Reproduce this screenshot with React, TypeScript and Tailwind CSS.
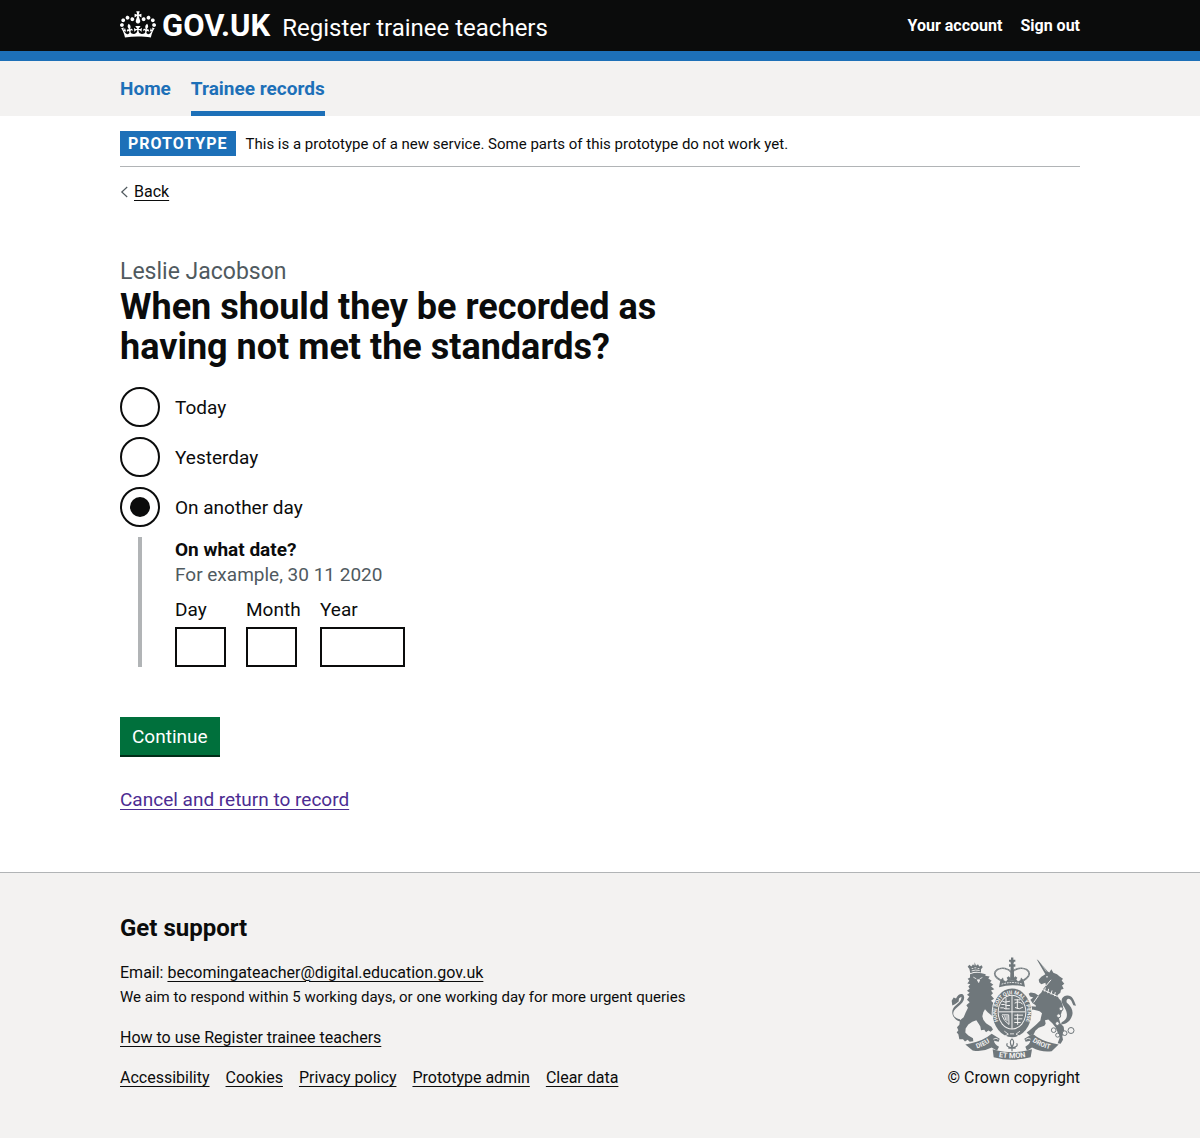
import { useState } from "react";

const CROWN_PATH =
  "M25 30.2c3.5 1.5 7.7-.2 9.1-3.7 1.5-3.6-.2-7.8-3.9-9.2-3.6-1.4-7.6.3-9.1 3.9-1.4 3.5.3 7.5 3.9 9zM9 39.5c3.6 1.5 7.8-.2 9.2-3.7 1.5-3.6-.2-7.8-3.9-9.1-3.6-1.5-7.6.2-9.1 3.8-1.4 3.5.3 7.5 3.8 9zM4.4 57.2c3.5 1.5 7.7-.2 9.1-3.8 1.5-3.6-.2-7.7-3.9-9.1-3.5-1.5-7.6.3-9.1 3.8-1.4 3.5.3 7.6 3.9 9.1zm38.3-21.4c3.5 1.5 7.7-.2 9.1-3.8 1.5-3.6-.2-7.7-3.9-9.1-3.6-1.5-7.6.3-9.1 3.8-1.3 3.6.4 7.7 3.9 9.1zm64.4-5.6c-3.6 1.5-7.8-.2-9.1-3.7-1.5-3.6.2-7.8 3.8-9.2 3.6-1.4 7.7.3 9.2 3.9 1.3 3.5-.4 7.5-3.9 9zm15.9 9.3c-3.6 1.5-7.7-.2-9.1-3.7-1.5-3.6.2-7.8 3.7-9.1 3.6-1.5 7.7.2 9.2 3.8 1.5 3.5-.3 7.5-3.8 9zm4.7 17.7c-3.6 1.5-7.8-.2-9.2-3.8-1.5-3.6.2-7.7 3.9-9.1 3.6-1.5 7.7.3 9.2 3.8 1.3 3.5-.4 7.6-3.9 9.1zM89.3 35.8c-3.6 1.5-7.8-.2-9.2-3.8-1.4-3.6.2-7.7 3.9-9.1 3.6-1.5 7.7.3 9.2 3.8 1.4 3.6-.3 7.7-3.9 9.1zM69.7 17.7l8.9 4.7V9.3l-8.9 2.8c-.2-.3-.5-.6-.9-.9L72.4 0H59.6l3.5 11.2c-.3.3-.6.5-.9.9l-8.8-2.8v13.1l8.8-4.7c.3.3.6.7.9.9l-5 15.4v.1c-.2.8-.4 1.6-.4 2.4 0 4.1 3.1 7.5 7 8.1h.2c.3 0 .7.1 1 .1.4 0 .7 0 1-.1h.2c4-.6 7.1-4.1 7.1-8.1 0-.8-.1-1.7-.4-2.4V34l-5.1-15.4c.4-.2.7-.6 1-.9zM66 92.8c16.9 0 32.8 1.1 47.1 3.2 4-16.9 8.9-26.7 14-33.5l-9.6-3.4c1 4.9 1.1 7.2 0 10.2-1.5-1.4-3-4.3-4.2-8.7L108.6 76c2.8-2 5-3.2 7.5-3.3-4.4 9.4-10 11.9-13.6 11.2-4.3-.8-6.3-4.6-5.6-7.9 1-4.7 5.7-5.9 8-.5 4.3-8.7-3-11.4-7.6-8.8 7.1-7.2 7.9-13.5 2.1-21.1-8 6.1-8.1 12.3-4.5 20.8-4.7-5.4-12.1-2.5-9.5 6.2 3.4-5.2 7.9-2 7.2 3.1-.6 4.3-6.4 7.8-13.5 7.2-10.3-.9-10.9-8-11.2-13.8 2.5-.5 7.1 1.8 11 7.3L80.2 60c-4.1 4.4-8 5.3-12.3 5.4 1.4-4.4 8-11.6 8-11.6H55.5s6.4 7.2 7.9 11.6c-4.2-.1-8-1-12.3-5.4l1.4 16.4c3.9-5.5 8.5-7.7 10.9-7.3-.3 5.8-.9 12.8-11.1 13.8-7.2.6-12.9-2.9-13.5-7.2-.7-5 3.8-8.3 7.1-3.1 2.7-8.7-4.6-11.6-9.4-6.2 3.7-8.5 3.6-14.7-4.6-20.8-5.8 7.6-5 13.9 2.2 21.1-4.7-2.6-11.9.1-7.7 8.8 2.3-5.5 7.1-4.2 8.1.5.7 3.3-1.3 7.1-5.7 7.9-3.5.7-9-1.8-13.5-11.2 2.5.1 4.7 1.3 7.5 3.3l-4.7-15.4c-1.2 4.4-2.7 7.2-4.3 8.7-1.1-3-.9-5.3 0-10.2l-9.5 3.4c5 6.9 9.9 16.7 14 33.5 14.8-2.1 30.8-3.2 47.7-3.2z";

function Crown() {
  return (
    <svg viewBox="0 0 132 97" className="mb-[3px] h-[27px] w-9 shrink-0 fill-white" aria-hidden="true">
      <path d={CROWN_PATH} />
    </svg>
  );
}

function CoatOfArms() {
  const dark = "#6f777b";
  const light = "#f3f2f1";
  return (
    <svg viewBox="36 32 375 308" width="125" height="103" aria-hidden="true" fill={dark} fontFamily="Roboto, sans-serif" fontWeight="700">
      <defs>
        <path id="arms-motto" d="M186 238A46 56 0 1 1 252 238" />
        <path id="arms-dieu" d="M108 308Q136 300 158 283" />
        <path id="arms-mon" d="M172 330Q219 340 267 330" />
        <path id="arms-droit" d="M275 281Q302 302 338 309" />
      </defs>

      {/* Lion's crown */}
      <path d="M94 80L91 67L86 61L91 55L97 60L102 53L106 58L107 47L111 58L117 53L121 60L128 56L131 62L126 68L126 78Q109 73 94 80Z" />
      <path d="M98 66h5M106 64h6M116 66h5M98 73Q110 69 122 72" stroke={light} strokeWidth="2.5" fill="none" />

      {/* Lion */}
      <path d="M93 83Q110 77 128 80L140 83L139 88L152 90L148 96L158 103L153 107L163 115L156 119L166 128L156 132L162 140L156 146L165 157L156 163L164 170L160 176L176 184L173 191L182 196L172 201L177 209L168 213L158 207L146 197L138 188L133 197L130 209L133 220L141 230L157 241L162 249L155 256L148 252L141 257L136 250L126 251L124 240L118 230L112 221L100 226L88 234L80 246L79 258L88 267L102 275L103 284L92 286L86 280L78 285L72 278L61 278L58 263L53 258L58 251L54 242L61 235L63 221L74 212L80 198L87 184L82 176L92 167L84 160L91 150L84 145L92 139L84 133L92 127L88 120L94 113L85 111L91 103L86 97L93 93Z" />
      <path d="M103 92l9 5M122 97l8-4M115 100h7l-3 8z" stroke={light} strokeWidth="2.5" fill={light} />
      <path d="M63 218C40 214 36 196 54 183C72 170 79 158 74 147C69 139 58 142 51 156L44 153L38 163L40 177L48 173L59 165L60 156L67 151C69 161 61 169 50 177C30 193 42 220 63 225Z" />

      {/* Unicorn */}
      <path d="M293 38L299 43L326 75L331 78L337 68L343 79L354 83L362 90L372 97L368 102L376 112L369 117L374 127L366 130L364 139L355 146L359 155L367 164L372 180L369 193L365 207L360 216L364 230L374 241L376 255L370 269L372 280L365 292L356 290L362 274L357 260L350 243L340 230L328 219L318 221L320 232L316 238L299 244L289 253L285 262L272 267L263 258L271 252L278 246L291 235L304 222L306 212L309 200L302 194L292 187L290 176L281 170L274 160L283 153L273 150L269 142L275 138L288 140L298 147L307 138L313 127L321 117L319 109L307 113L301 108L299 100L307 91L319 83Z" />
      <path d="M303 194l-22-5l-5 5l-6-6l7-9l16 2l8 6z" />
      <path d="M302 44l20 31" stroke={light} strokeWidth="1.5" />
      <circle cx="324" cy="91" r="2.5" fill={light} />
      <path d="M304 126l52 24M309 119l-3 13M319 123l-3 12M329 127l-3 13M339 132l-3 12M349 137l-3 12" stroke={light} strokeWidth="3" fill="none" />
      <path d="M298 148l-14 20M336 100l-15 18" stroke={light} strokeWidth="3" fill="none" />
      <path d="M368 227C388 219 387 199 376 182C362 163 367 149 384 147C399 146 404 158 411 178L403 176L397 163C391 152 380 156 383 168C400 182 405 199 397 213C390 228 379 233 366 234Z" />
      <g fill={light} stroke={dark} strokeWidth="3">
        <circle cx="366" cy="187" r="6" />
        <circle cx="359" cy="208" r="6" />
        <circle cx="355" cy="231" r="6" />
        <circle cx="344" cy="251" r="7" />
        <circle cx="356" cy="266" r="6" />
        <circle cx="377" cy="260" r="7" />
        <circle cx="396" cy="252" r="9" />
      </g>

      {/* Ribbon and rose */}
      <path d="M79 294L96 290Q132 284 158 262L182 277L179 286L165 283Q166 294 180 301L174 313L158 303Q130 318 101 312Z" />
      <path d="M359 294L342 290Q307 284 281 262L256 277L260 286L274 283Q273 293 259 301L264 313L279 303Q307 318 338 314Z" />
      <path d="M161 308L174 312Q218 322 264 312L279 308L275 332Q219 347 164 332Z" />
      <path d="M163 278Q172 272 178 279M275 278Q267 272 260 279" fill="none" stroke={light} strokeWidth="2.5" />
      <path d="M219 277q10 8 0 25q-10-17 0-25zM205 290q-6 11 12 13M233 290q6 11-12 13M208 305h22M219 302v12" fill="none" stroke={dark} strokeWidth="3.5" />

      {/* Royal crown */}
      <path d="M186 102C163 90 164 77 174 70C190 61 208 66 218 78C229 66 248 61 264 70C274 77 274 90 253 102" fill="none" stroke={dark} strokeWidth="5" />
      <path d="M186 102C163 90 164 77 174 70C190 61 208 66 218 78C229 66 248 61 264 70C274 77 274 90 253 102" fill="none" stroke={light} strokeWidth="1.5" strokeDasharray="2 3" />
      <path d="M215 61h-5v-8h6l-2-7h-4v-6h6v-7h7v7h6v6h-4l-2 7h6v8h-5l2 42h-13z" />
      <path d="M184 101l8-8l2 8l7 4l5-6l-3-5l6-5l6 6l-3 6l7 2l7-2l-3-6l6-6l6 5l-3 5l5 6l7-4l2-8l8 8l4 20Q219 111 180 122Z" />
      <path d="M188 113Q219 103 250 113" stroke={light} strokeWidth="3" strokeDasharray="5 3" fill="none" />

      {/* Garter and shield */}
      <ellipse cx="219" cy="199" rx="61" ry="76" fill={light} />
      <ellipse cx="219" cy="199" rx="58" ry="73" />
      <text fill={light} fontSize="16">
        <textPath href="#arms-motto" textAnchor="middle" startOffset="50%">HONI SOIT QUI MAL Y PENSE</textPath>
      </text>
      <ellipse cx="219" cy="197" rx="43" ry="52" fill={light} />
      <ellipse cx="219" cy="197" rx="40" ry="49" />
      <path d="M219 147v100M179 196h80" stroke={light} strokeWidth="3" />
      <g stroke={light} strokeWidth="3" fill="none">
        <path d="M190 164l8 3l15-3M187 174h9l7 3h10M184 184h9l6 3h13M201 155v33" />
        <path d="M226 160h17M227 170q13-8 24 3M228 183q14 8 24-1M235 158v29" />
        <path d="M189 207q5 16 21 27M189 205h20l1 29M197 207l3 13M204 207v17" />
        <path d="M226 206h26M225 217h25M226 228h19M236 202v33" />
      </g>
      <path d="M196 254l12 9l-11 6M213 262h12M243 254l-12 9l11 6" stroke={light} strokeWidth="2.5" fill="none" />

      <g fill={light} fontSize="20">
        <text><textPath href="#arms-dieu" textAnchor="middle" startOffset="50%">DIEU</textPath></text>
        <text fontSize="22"><textPath href="#arms-mon" textAnchor="middle" startOffset="50%">ET MON</textPath></text>
        <text><textPath href="#arms-droit" textAnchor="middle" startOffset="50%">DROIT</textPath></text>
      </g>
    </svg>
  );
}

const OPTIONS = ["Today", "Yesterday", "On another day"];

const DATE_PARTS = [
  { id: "day", label: "Day", column: "w-[51px]", input: "w-[51px]" },
  { id: "month", label: "Month", column: "w-[54px]", input: "w-[51px]" },
  { id: "year", label: "Year", column: "w-[85px]", input: "w-[85px]" },
];

const FOOTER_LINKS = ["Accessibility", "Cookies", "Privacy policy", "Prototype admin", "Clear data"];

const footerLink = "underline decoration-1 underline-offset-[3px]";

export default function App() {
  const [choice, setChoice] = useState("On another day");

  return (
    <div className="flex min-h-screen flex-col bg-white font-['Roboto',sans-serif] text-[#0b0c0c]">
      <header>
        <div className="border-b-10 border-[#1d70b8] bg-[#0b0c0c] text-white">
          <div className="mx-auto flex h-[51px] max-w-[960px] items-center justify-between">
            <div className="flex items-center">
              <a href="#govuk" className="flex items-center gap-[6px]">
                <Crown />
                <span className="text-[31px] leading-[30px] font-bold">GOV.UK</span>
              </a>
              <a href="#service" className="ml-3 pt-1 text-2xl leading-[30px]">Register trainee teachers</a>
            </div>
            <div className="flex gap-[18px] text-base leading-5 font-bold">
              <a href="#account">Your account</a>
              <a href="#sign-out">Sign out</a>
            </div>
          </div>
        </div>
        <nav className="bg-[#f3f2f1]">
          <div className="mx-auto flex max-w-[960px] gap-5 text-[19px] leading-[25px] font-bold text-[#1d70b8]">
            <a href="#home" className="border-b-5 border-transparent pt-[15px] pb-[10px]">Home</a>
            <a href="#records" aria-current="page" className="border-b-5 border-[#1d70b8] pt-[15px] pb-[10px]">Trainee records</a>
          </div>
        </nav>
      </header>

      <div className="mx-auto w-full max-w-[960px] grow">
        <div className="flex items-center gap-[10px] border-b border-[#b1b4b6] pt-[15px] pb-[10px]">
          <strong className="bg-[#1d70b8] px-2 text-base leading-[25px] font-bold tracking-[1px] text-white">PROTOTYPE</strong>
          <span className="text-[15px] leading-5">This is a prototype of a new service. Some parts of this prototype do not work yet.</span>
        </div>

        <a href="#back" className="mt-[15px] inline-flex items-center gap-[6px] text-base leading-5">
          <svg viewBox="0 0 8 12" className="h-3 w-2" fill="none" stroke="#505a5f" strokeWidth="1.2" aria-hidden="true">
            <path d="M7.2 1L1.8 6L7.2 11" />
          </svg>
          <span className="underline decoration-1 underline-offset-[3px]">Back</span>
        </a>

        <form className="mt-[52px] max-w-[630px]" onSubmit={(e) => e.preventDefault()}>
          <fieldset>
            <legend>
              <span className="block text-[23px] leading-[30px] text-[#505a5f]">Leslie Jacobson</span>
              <h1 className="max-w-[560px] text-4xl leading-10 font-bold">When should they be recorded as having not met the standards?</h1>
            </legend>
            <div className="mt-5 flex flex-col gap-[10px]">
              {OPTIONS.map((option) => (
                <label key={option} className="flex h-10 items-center gap-[15px] self-start text-[19px] leading-[25px]">
                  <input
                    type="radio"
                    name="when"
                    value={option}
                    checked={choice === option}
                    onChange={() => setChoice(option)}
                    className="grid size-10 appearance-none place-content-center rounded-full border-2 border-[#0b0c0c] before:size-5 before:rounded-full checked:before:bg-[#0b0c0c]"
                  />
                  {option}
                </label>
              ))}
            </div>

            <fieldset className="mt-[10px] ml-[18px] border-l-4 border-[#b1b4b6] pl-[33px] text-[19px] leading-[25px]">
              <legend className="float-left w-full font-bold">On what date?</legend>
              <p className="clear-both text-[#505a5f]">For example, 30 11 2020</p>
              <div className="mt-[10px] flex gap-5">
                {DATE_PARTS.map((part) => (
                  <div key={part.id} className={part.column}>
                    <label htmlFor={part.id} className="block">{part.label}</label>
                    <input id={part.id} type="text" inputMode="numeric" className={`mt-[5px] block h-10 border-2 border-[#0b0c0c] bg-white px-1 ${part.input}`} />
                  </div>
                ))}
              </div>
            </fieldset>
          </fieldset>

          <button type="submit" className="mt-[50px] block bg-[#00703c] px-3 pt-[7px] pb-[6px] text-[19px] leading-[25px] text-white shadow-[0_2px_0_#002d18]">Continue</button>
          <a href="#cancel" className="mt-8 inline-block text-[19px] leading-[25px] text-[#4c2c92] underline decoration-1 underline-offset-[3px]">Cancel and return to record</a>
        </form>
      </div>

      <footer className="mt-[50px] border-t border-[#b1b4b6] bg-[#f3f2f1] pt-10 pb-[50px] text-base leading-5">
        <div className="mx-auto flex max-w-[960px] items-end justify-between">
          <div>
            <h2 className="text-2xl leading-[30px] font-bold">Get support</h2>
            <p className="mt-[17px] leading-[25px]">
              Email: <a href="#email" className={footerLink}>becomingateacher@digital.education.gov.uk</a>
            </p>
            <p className="text-[15px] leading-[25px]">We aim to respond within 5 working days, or one working day for more urgent queries</p>
            <p className="mt-[18px]">
              <a href="#guide" className={footerLink}>How to use Register trainee teachers</a>
            </p>
            <ul className="mt-5 flex gap-4">
              {FOOTER_LINKS.map((name) => (
                <li key={name}>
                  <a href="#footer" className={footerLink}>{name}</a>
                </li>
              ))}
            </ul>
          </div>
          <a href="#copyright" className="flex flex-col items-center gap-2">
            <CoatOfArms />
            <span>© Crown copyright</span>
          </a>
        </div>
      </footer>
    </div>
  );
}
